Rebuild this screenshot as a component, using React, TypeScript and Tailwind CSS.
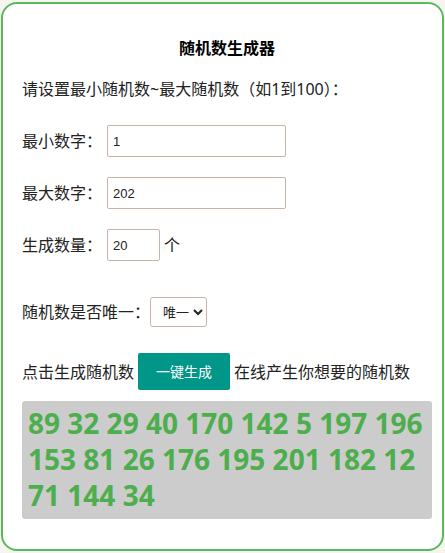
import { useState } from 'react';

// 随机数生成器 — 一张卡片,表单 + 结果
const CJK = "font-['Noto_Sans','Noto_Sans_CJK_SC',sans-serif]";

const NUMERI = [89, 32, 29, 40, 170, 142, 5, 197, 196, 153, 81, 26, 176, 195, 201, 182, 12, 71, 144, 34];

export default function App() {
  const [minimo, setMinimo] = useState('1');
  const [massimo, setMassimo] = useState('202');
  const [quanti, setQuanti] = useState('20');
  const [unico, setUnico] = useState('1');

  return (
    <div className={`min-h-[553px] bg-[#f6f4ef] px-[1px] py-[2px] ${CJK}`}>
      <div className="h-[549px] rounded-[16px] border-2 border-[#5cb85c] bg-white pl-[19px] pr-[10px] pt-[32px] text-[16px] text-[#222]">
        <h1 className="text-center text-[16px] font-bold leading-[24px] text-black">随机数生成器</h1>

        <p className="mt-[17px] leading-[24px]">请设置最小随机数~最大随机数（如1到100）：</p>

        <div className="mt-[24px] flex items-center">
          <span className="w-[85px]">最小数字：</span>
          <input
            value={minimo}
            onChange={(e) => setMinimo(e.target.value)}
            className="h-[32px] w-[179px] rounded-[2px] border border-[#c8b3a8] px-[5px] font-['Liberation_Sans',sans-serif] text-[13px] outline-none"
          />
        </div>

        <div className="mt-[20px] flex items-center">
          <span className="w-[85px]">最大数字：</span>
          <input
            value={massimo}
            onChange={(e) => setMassimo(e.target.value)}
            className="h-[32px] w-[179px] rounded-[2px] border border-[#c8b3a8] px-[5px] font-['Liberation_Sans',sans-serif] text-[13px] outline-none"
          />
        </div>

        <div className="mt-[20px] flex items-center">
          <span className="w-[85px]">生成数量：</span>
          <input
            value={quanti}
            onChange={(e) => setQuanti(e.target.value)}
            className="h-[32px] w-[53px] rounded-[2px] border border-[#c8b3a8] px-[5px] font-['Liberation_Sans',sans-serif] text-[13px] outline-none"
          />
          <span className="ml-[4px]">个</span>
        </div>

        <div className="mt-[36px] flex items-center">
          <span className="w-[128px]">随机数是否唯一：</span>
          <select
            value={unico}
            onChange={(e) => setUnico(e.target.value)}
            className="h-[30px] w-[57px] rounded-[3px] border border-[#c8b3a8] bg-white pl-[8px] text-[13px] outline-none"
          >
            <option value="1">唯一</option>
            <option value="0">不唯一</option>
          </select>
        </div>

        <div className="mt-[26px] flex items-center">
          <span>点击生成随机数</span>
          <button
            type="button"
            className="ml-[4px] mr-[4px] h-[37px] w-[92px] rounded-[2px] bg-[#009688] text-[14px] text-white"
          >
            一键生成
          </button>
          <span>在线产生你想要的随机数</span>
        </div>

        <div className="mt-[11px] w-[410px] rounded-[3px] bg-[#cccccc] px-[6px] pb-[6px] pt-[4px] font-['Noto_Sans',sans-serif] text-[28px] font-bold leading-[36px] text-[#4cae4c]">
          {NUMERI.join(' ')}
        </div>
      </div>
    </div>
  );
}
